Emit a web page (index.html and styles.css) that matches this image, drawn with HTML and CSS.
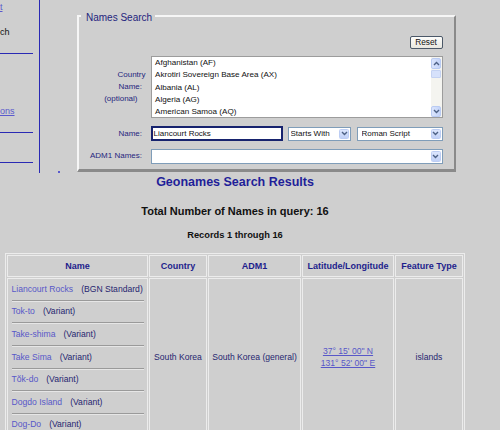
FILE: index.html
```html
<!DOCTYPE html>
<html lang="en">
<head>
    <meta charset="UTF-8">
    <title>Geonames Search Results</title>
    <link rel="stylesheet" href="styles.css">
</head>
<body>
    <div class="top">
        <div class="side">
            <div class="side-item item-top"><a href="#">t</a></div>
            <div class="side-item item-current">ch</div>
            <div class="side-rule rule-first"></div>
            <div class="side-item item-faq"><a href="#">ons</a></div>
            <div class="side-rule rule-second"></div>
            <div class="side-rule rule-third"></div>
        </div>
        <span class="dot"></span>
        <form class="search-form" id="searchForm">
            <fieldset class="search-box">
                <legend>Names Search</legend>
                <div class="form-grid">
                    <button type="reset" class="reset-btn">Reset</button>

                    <div class="label">
                        <span class="lbl-country">Country</span>
                        <span>Name:</span>
                        <span class="lbl-optional">(optional)</span>
                    </div>
                    <div class="listbox">
                        <ul class="options">
                            <li>Afghanistan (AF)</li>
                            <li>Akrotiri Sovereign Base Area (AX)</li>
                            <li>Albania (AL)</li>
                            <li>Algeria (AG)</li>
                            <li>American Samoa (AQ)</li>
                        </ul>
                        <div class="scrollbar">
                            <span class="scroll-btn">
                                <svg width="7" height="5" viewBox="0 0 7 5"><polyline points="1,4 3.5,1.5 6,4" fill="none" stroke="#4d6185" stroke-width="1.4"/></svg>
                            </span>
                            <span class="scroll-thumb"></span>
                            <span class="scroll-btn scroll-down">
                                <svg width="7" height="5" viewBox="0 0 7 5"><polyline points="1,1 3.5,3.5 6,1" fill="none" stroke="#4d6185" stroke-width="1.4"/></svg>
                            </span>
                        </div>
                    </div>

                    <div class="label">Name:</div>
                    <div class="name-controls">
                        <div class="name-input">Liancourt Rocks</div>
                        <div class="dropdown match">
                            <select name="match">
                                <option>Starts With</option>
                                <option>Contains</option>
                                <option>Exact Match</option>
                            </select>
                            <span class="drop-btn">
                                <svg width="7" height="5" viewBox="0 0 7 5"><polyline points="1,1 3.5,3.5 6,1" fill="none" stroke="#4d6185" stroke-width="1.4"/></svg>
                            </span>
                        </div>
                        <div class="dropdown script">
                            <select name="script">
                                <option>Roman Script</option>
                                <option>Non-Roman Script</option>
                            </select>
                            <span class="drop-btn">
                                <svg width="7" height="5" viewBox="0 0 7 5"><polyline points="1,1 3.5,3.5 6,1" fill="none" stroke="#4d6185" stroke-width="1.4"/></svg>
                            </span>
                        </div>
                    </div>

                    <div class="label">ADM1 Names:</div>
                    <div class="dropdown adm1">
                        <select name="adm1">
                            <option></option>
                        </select>
                        <span class="drop-btn">
                            <svg width="7" height="5" viewBox="0 0 7 5"><polyline points="1,1 3.5,3.5 6,1" fill="none" stroke="#4d6185" stroke-width="1.4"/></svg>
                        </span>
                    </div>
                </div>
            </fieldset>
        </form>
    </div>

    <div class="results">
        <div class="results-title">Geonames Search Results</div>
        <div class="total">Total Number of Names in query: 16</div>
        <div class="records">Records 1 through 16</div>

        <table class="names-table">
            <tr>
                <th class="col-name">Name</th>
                <th class="col-country">Country</th>
                <th class="col-adm1">ADM1</th>
                <th class="col-latlong">Latitude/Longitude</th>
                <th class="col-type">Feature Type</th>
            </tr>
            <tr>
                <td class="name-cell">
                    <div class="name-item"><a href="#">Liancourt Rocks</a><span class="name-kind">(BGN Standard)</span></div>
                    <div class="name-rule"></div>
                    <div class="name-item"><a href="#">Tok-to</a><span class="name-kind">(Variant)</span></div>
                    <div class="name-rule"></div>
                    <div class="name-item"><a href="#">Take-shima</a><span class="name-kind">(Variant)</span></div>
                    <div class="name-rule"></div>
                    <div class="name-item"><a href="#">Take Sima</a><span class="name-kind">(Variant)</span></div>
                    <div class="name-rule"></div>
                    <div class="name-item"><a href="#">Tŏk-do</a><span class="name-kind">(Variant)</span></div>
                    <div class="name-rule"></div>
                    <div class="name-item"><a href="#">Dogdo Island</a><span class="name-kind">(Variant)</span></div>
                    <div class="name-rule"></div>
                    <div class="name-item"><a href="#">Dog-Do</a><span class="name-kind">(Variant)</span></div>
                </td>
                <td>South Korea</td>
                <td>South Korea (general)</td>
                <td class="latlong"><a href="#">37° 15' 00" N</a><br><a href="#">131° 52' 00" E</a></td>
                <td>islands</td>
            </tr>
        </table>
    </div>
</body>
</html>
```

FILE: styles.css
```css
body {
    margin: 0;
    background-color: #cfcfcf;
    font-family: "Liberation Sans", Arial, sans-serif;
    color: #111;
}
.top {
    display: flex;
    align-items: flex-start;
}

/* left navigation */
.side {
    flex-shrink: 0;
    width: 39px;
    height: 173px;
    border-right: 1.5px solid #2a2ab4;
    font-size: 9px;
}
.side-item {
    line-height: 11px;
    white-space: nowrap;
}
.side-item a {
    color: #5a5acd;
}
.side-rule {
    width: 33px;
    border-top: 1.5px solid #2a2ab4;
}
.item-top {
    margin-top: 1.5px;
}
.item-current {
    margin-top: 14px;
}
.rule-first {
    margin-top: 15.5px;
}
.item-faq {
    margin-top: 52px;
}
.rule-second {
    margin-top: 14.5px;
}
.rule-third {
    margin-top: 29.5px;
}
.dot {
    align-self: flex-end;
    width: 2px;
    height: 2px;
    margin-left: 18px;
    background: #5a5acd;
}

/* search form */
.search-form {
    margin: 8.5px 0 0 16.5px;
}
.search-box {
    box-sizing: border-box;
    width: 379px;
    margin: 0;
    padding: 12.2px 11px 5.2px 0;
    border-style: solid;
    border-width: 2px 2px 3px 2px;
    border-color: #f6f6f6 #8a8a8a #8a8a8a #f6f6f6;
    min-inline-size: 0;
}
.search-box legend {
    margin-left: 2px;
    padding: 3px 3px 0 5.5px;
    font-size: 10px;
    line-height: 12px;
    color: #24247e;
}
.form-grid {
    display: grid;
    grid-template-columns: 68px 292px;
    column-gap: 4px;
    row-gap: 7.7px;
    align-items: center;
}
.label {
    padding-right: 4.5px;
    text-align: right;
    font-size: 8px;
    line-height: 12.1px;
    color: #26267e;
}
.label span {
    display: block;
}
.lbl-country {
    margin-right: -3.5px;
}
.lbl-optional {
    margin-right: 4.5px;
}
.reset-btn {
    grid-column: 2;
    justify-self: end;
    width: 33px;
    height: 13px;
    padding: 0;
    border: 1px solid #4b5868;
    border-radius: 2px;
    background: linear-gradient(#fdfdfb, #e8e7e0);
    font: 8.3px "Liberation Sans", Arial, sans-serif;
    color: #111;
}
.listbox {
    display: flex;
    box-sizing: border-box;
    height: 62px;
    border: 1px solid #9c9c9c;
    background: #fff;
}
.options {
    flex: 1;
    margin: 0;
    padding: 0 0 0 3.5px;
    list-style: none;
    overflow: hidden;
    font-size: 8.1px;
    line-height: 12.1px;
    white-space: nowrap;
}
.scrollbar {
    display: flex;
    flex-direction: column;
    width: 11px;
    background: #f4f4f0;
}
.scroll-btn {
    display: flex;
    align-items: center;
    justify-content: center;
    height: 9px;
    margin: 0.5px;
    border: 1px solid #b9cbf3;
    border-radius: 2px;
    background: linear-gradient(90deg, #dbe5fd, #c3d3f8);
}
.scroll-down {
    margin-top: auto;
}
.scroll-thumb {
    height: 6px;
    margin: 0.5px 0.5px 0;
    border: 1px solid #c4d2f2;
    border-radius: 1px;
    background: #d6e1fb;
}
.name-controls {
    display: flex;
    align-items: center;
    column-gap: 5.5px;
}
.name-input {
    box-sizing: border-box;
    width: 132px;
    height: 15px;
    padding: 0 1px;
    border: 2px solid #17236e;
    background: #fff;
    font-size: 8px;
    line-height: 11px;
    white-space: nowrap;
}
.dropdown {
    display: flex;
    box-sizing: border-box;
    height: 15px;
    border: 1px solid #7f9db9;
    background: #fff;
}
.dropdown select {
    flex: 1;
    min-width: 0;
    height: 100%;
    margin: 0;
    padding: 0 0 0 1.5px;
    border: 0;
    background: transparent;
    appearance: none;
    font: 8px "Liberation Sans", Arial, sans-serif;
    color: #111;
    outline: none;
}
.match {
    width: 63px;
    height: 14px;
}
.script {
    width: 86px;
    height: 14px;
}
.script select {
    padding-left: 4px;
}
.drop-btn {
    display: flex;
    align-items: center;
    justify-content: center;
    width: 8px;
    margin: 1px;
    border: 0.5px solid #bccdf4;
    border-radius: 1.5px;
    background: linear-gradient(#dce6fd, #c1d1f7);
}

/* results */
.results {
    width: 470px;
    text-align: center;
}
.results-title {
    margin-top: 2px;
    font-size: 12.5px;
    line-height: 15px;
    font-weight: bold;
    color: #1f1f99;
}
.total {
    margin-top: 13.7px;
    font-size: 11px;
    line-height: 14px;
    font-weight: bold;
}
.records {
    margin-top: 11.3px;
    font-size: 9.3px;
    line-height: 12px;
    font-weight: bold;
}
.names-table {
    table-layout: fixed;
    width: 460px;
    margin: 12px auto 0;
    border: 1px solid #ececec;
    border-spacing: 1px;
    font-size: 8.6px;
    color: #262670;
}
.names-table th,
.names-table td {
    padding: 0;
    border: 1px solid #ececec;
}
.names-table th {
    height: 20px;
    font-size: 9px;
    color: #1e1e8c;
}
.col-name { width: 139px; }
.col-country { width: 56px; }
.col-adm1 { width: 91px; }
.col-latlong { width: 90px; }
.col-type { width: 66px; }
.names-table a {
    color: #5858c8;
}
.name-cell {
    padding: 4.8px 3.5px 4.6px !important;
    text-align: left;
    vertical-align: top;
}
.name-item {
    line-height: 11px;
    white-space: nowrap;
}
.name-item a {
    text-decoration: none;
}
.name-kind {
    margin-left: 8px;
}
.name-rule {
    margin: 5px 0 4.6px;
    border-top: 1px solid #9a9a9a;
    border-bottom: 1px solid #e6e6e6;
}
.latlong {
    line-height: 12px;
}
```
